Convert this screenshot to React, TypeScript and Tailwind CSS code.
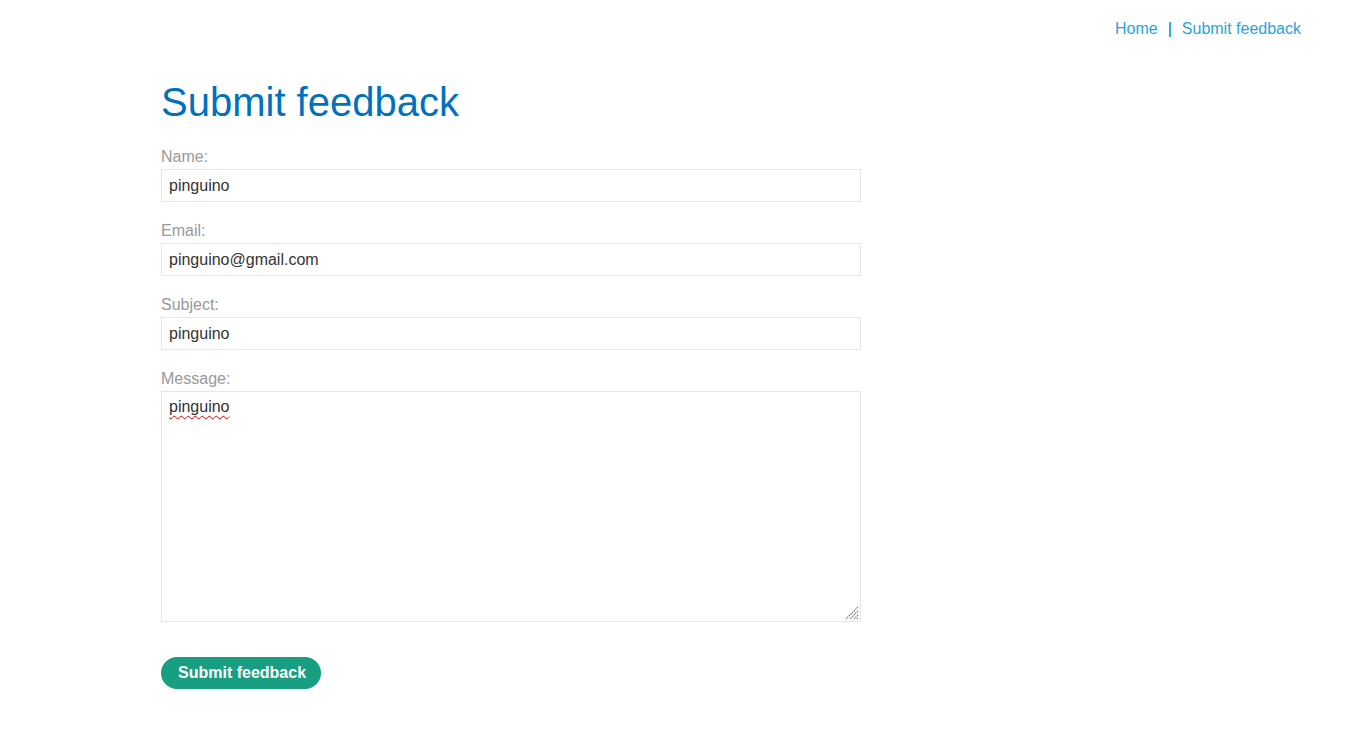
import React from "react";

const fields = [
  { label: "Name:", value: "pinguino" },
  { label: "Email:", value: "pinguino@gmail.com" },
  { label: "Subject:", value: "pinguino" },
];

export default function App() {
  return (
    <div className="min-h-screen bg-white font-['Liberation_Sans',Arial,sans-serif]">
      {/* top nav */}
      <nav className="flex justify-end items-center pt-[19px] pr-[48px] text-[16px] leading-[20px]">
        <a href="#" className="text-[#29a3e0]">Home</a>
        <span className="mx-[10px] text-[#0071bc]">|</span>
        <a href="#" className="text-[#29a3e0]">Submit feedback</a>
      </nav>

      <main className="pl-[161px] w-[861px]">
        <h1 className="mt-[39px] text-[40px] leading-[48px] text-[#0071bc]">Submit feedback</h1>

        <form className="mt-[21px]" onSubmit={(e) => e.preventDefault()}>
          {fields.map((f) => (
            <div key={f.label} className="mb-[19px]">
              <label className="block text-[16px] leading-[20px] text-[#999999] mb-[2px]">{f.label}</label>
              <input
                defaultValue={f.value}
                className="block w-[700px] h-[33px] border border-[#e6e6e6] px-[7px] text-[16px] text-[#333333] outline-none"
              />
            </div>
          ))}

          <div>
            <label className="block text-[16px] leading-[20px] text-[#999999] mb-[2px]">Message:</label>
            <div className="relative w-[700px] h-[231px] border border-[#e6e6e6] px-[7px] pt-[5px] text-[16px] leading-[20px] text-[#333333]">
              <span className="underline decoration-wavy decoration-[#e00000] decoration-1 underline-offset-[3px]">pinguino</span>
              {/* resize grip */}
              <svg className="absolute right-[1px] bottom-[1px]" width="15" height="15" viewBox="0 0 15 15">
                <g stroke="#777777" strokeWidth="1.2" strokeDasharray="1.5 0.8">
                  <line x1="14" y1="2" x2="2" y2="14" />
                  <line x1="14" y1="6" x2="6" y2="14" />
                  <line x1="14" y1="10" x2="10" y2="14" />
                  <line x1="14" y1="13" x2="13" y2="14" />
                </g>
              </svg>
            </div>
          </div>

          <button
            type="submit"
            className="mt-[35px] h-[32px] pl-[17px] pr-[15px] rounded-full bg-[#189e80] text-white font-bold text-[16px]"
          >
            Submit feedback
          </button>
        </form>
      </main>
    </div>
  );
}
